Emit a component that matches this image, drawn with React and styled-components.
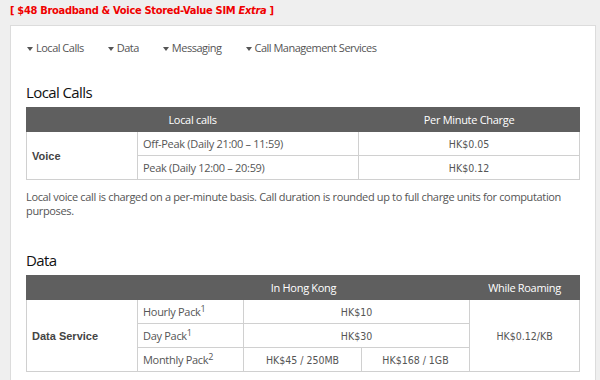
import React from "react";
import styled, { createGlobalStyle } from "styled-components";

const Global = createGlobalStyle`
  html, body { margin: 0; padding: 0; background: #efefef; }
  body { font-family: "Open Sans", "Noto Sans", sans-serif; color: #555; }
`;

const Page = styled.div`
  width: 600px;
  height: 380px;
  overflow: hidden;
  background: #efefef;
`;

const Title = styled.div`
  padding: 4px 0 0 10px;
  height: 22px;
  box-sizing: border-box;
  font-family: "DejaVu Sans Condensed", "DejaVu Sans", Verdana, sans-serif;
  font-stretch: condensed;
  font-weight: bold;
  font-size: 11px;
  line-height: 14px;
  color: #f00000;
  letter-spacing: -0.3px;
  em { font-style: italic; }
`;

const Panel = styled.div`
  margin: 3px 0 0 10px;
  width: 586px;
  box-sizing: border-box;
  background: #fff;
  border: 1px solid #dcdcdc;
  padding: 14px 16px 40px 15px;
`;

const Nav = styled.ul`
  list-style: none;
  margin: 0;
  padding: 0 0 0 1px;
  display: flex;
  gap: 24px;
  font-size: 11px;
  line-height: 16px;
  letter-spacing: -0.5px;
  color: #555;
`;

const NavItem = styled.li`
  display: flex;
  align-items: center;
  gap: 3px;
  &::before {
    content: "";
    display: block;
    margin-top: 1px;
    border-left: 3px solid transparent;
    border-right: 3px solid transparent;
    border-top: 4px solid #555;
  }
`;

const Heading = styled.h2`
  margin: ${(p) => p.$top}px 0 4px 0;
  font-size: 15px;
  font-weight: normal;
  color: #111;
  line-height: 22px;
  letter-spacing: -0.6px;
`;

const Table = styled.table`
  width: 553px;
  border-collapse: collapse;
  table-layout: fixed;
  font-size: 11px;
  letter-spacing: -0.3px;
`;

const Th = styled.th`
  background: #5f5f5f;
  color: #fff;
  font-weight: normal;
  font-size: 11px;
  height: 23px;
  padding: 0;
  border: 1px solid #5f5f5f;
  border-left-color: #d0d0d0;
  text-align: center;
  &:first-child { border-left-color: #5f5f5f; }
`;

const Td = styled.td`
  height: 23px;
  padding: 0 0 0 ${(p) => (p.$center ? 0 : 5)}px;
  border: 1px solid #d0d0d0;
  text-align: ${(p) => (p.$center ? "center" : "left")};
  color: #555;
  line-height: 14px;
  white-space: nowrap;
  sup { font-size: 9px; vertical-align: 4px; line-height: 0; }
`;

const Label = styled(Td)`
  font-family: "Liberation Sans", Arial, sans-serif;
  font-weight: bold;
  font-size: 11px;
  letter-spacing: 0;
  color: #444;
  padding-left: 5px;
`;

const Price = styled(Td)`
  font-family: "DejaVu Sans Condensed", "DejaVu Sans", Verdana, sans-serif;
  font-stretch: condensed;
  font-size: 10.5px;
  letter-spacing: 0;
  text-align: center;
  padding: 0;
`;

const Note = styled.p`
  margin: 10px 0 0 0;
  font-size: 11px;
  line-height: 14px;
  color: #555;
  letter-spacing: -0.35px;
`;

export default function App() {
  return (
    <Page>
      <Global />
      <Title>
        [ $48 Broadband &amp; Voice Stored-Value SIM <em>Extra</em> ]
      </Title>
      <Panel>
        <Nav>
          <NavItem>Local Calls</NavItem>
          <NavItem>Data</NavItem>
          <NavItem>Messaging</NavItem>
          <NavItem>Call Management Services</NavItem>
        </Nav>
        <Heading $top={25}>Local Calls</Heading>
        <Table>
          <colgroup>
            <col style={{ width: 111 }} />
            <col style={{ width: 221 }} />
            <col style={{ width: 221 }} />
          </colgroup>
          <thead>
            <tr>
              <Th colSpan={2}>Local calls</Th>
              <Th>Per Minute Charge</Th>
            </tr>
          </thead>
          <tbody>
            <tr>
              <Label rowSpan={2}>Voice</Label>
              <Td>Off-Peak (Daily 21:00 – 11:59)</Td>
              <Price>HK$0.05</Price>
            </tr>
            <tr>
              <Td>Peak (Daily 12:00 – 20:59)</Td>
              <Price>HK$0.12</Price>
            </tr>
          </tbody>
        </Table>
        <Note>
          Local voice call is charged on a per-minute basis. Call duration is rounded up to full charge units for computation purposes.
        </Note>
        <Heading $top={31}>Data</Heading>
        <Table>
          <colgroup>
            <col style={{ width: 111 }} />
            <col style={{ width: 106 }} />
            <col style={{ width: 118 }} />
            <col style={{ width: 108 }} />
            <col style={{ width: 110 }} />
          </colgroup>
          <thead>
            <tr>
              <Th></Th>
              <Th colSpan={3}>In Hong Kong</Th>
              <Th>While Roaming</Th>
            </tr>
          </thead>
          <tbody>
            <tr>
              <Label rowSpan={3}>Data Service</Label>
              <Td>Hourly Pack<sup>1</sup></Td>
              <Price colSpan={2}>HK$10</Price>
              <Price rowSpan={3}>HK$0.12/KB</Price>
            </tr>
            <tr>
              <Td>Day Pack<sup>1</sup></Td>
              <Price colSpan={2}>HK$30</Price>
            </tr>
            <tr>
              <Td>Monthly Pack<sup>2</sup></Td>
              <Price>HK$45 / 250MB</Price>
              <Price>HK$168 / 1GB</Price>
            </tr>
          </tbody>
        </Table>
      </Panel>
    </Page>
  );
}
